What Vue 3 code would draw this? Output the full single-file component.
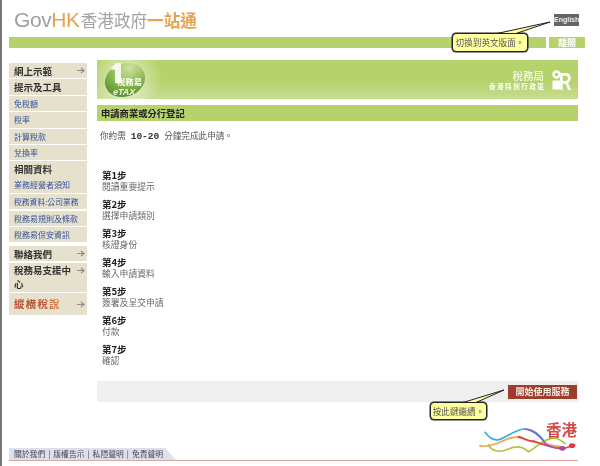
<script setup>
const navItems = [
  { t: '網上示範', k: 'head', arrow: true, h: 15, mb: 1 },
  { t: '提示及工具', k: 'head', h: 16, mb: 1 },
  { t: '免稅額', k: 'link', h: 15, mb: 1 },
  { t: '稅率', k: 'link', h: 16, mb: 1 },
  { t: '計算稅款', k: 'link', h: 15, mb: 1 },
  { t: '兌換率', k: 'link', h: 15, mb: 1 },
  { t: '相關資料', k: 'head', h: 16, mb: 0 },
  { t: '業務經營者須知', k: 'link', h: 16, mb: 1 },
  { t: '稅務資料:公司業務', k: 'link tight', h: 15, mb: 2 },
  { t: '稅務易規則及條款', k: 'link', h: 15, mb: 1 },
  { t: '稅務易保安資訊', k: 'link', h: 15, mb: 4 },
  { t: '聯絡我們', k: 'head', arrow: true, h: 15, mb: 2 },
  { t: '稅務易支援中心', k: 'head wrap', arrow: true, h: 29, mb: 1 },
  { t: '縱橫稅說', k: 'head art', arrow: true, h: 22, mb: 0 },
]
const steps = [
  ['第1步', '閱讀重要提示'],
  ['第2步', '選擇申請類別'],
  ['第3步', '核證身份'],
  ['第4步', '輸入申請資料'],
  ['第5步', '簽署及呈交申請'],
  ['第6步', '付款'],
  ['第7步', '確認'],
]
const footer = ['關於我們', '版權告示', '私隱聲明', '免責聲明']
</script>

<template>
  <div class="page">
    <header class="top">
      <div class="brand">
        <span class="gov">Gov</span><span class="hk">HK</span><span class="zh-gray">香港政府</span><span class="zh-orange">一站通</span>
      </div>
      <div class="english">English</div>
    </header>

    <div class="topbar">
      <div class="bar-main"></div>
      <div class="bar-exit">離開</div>
    </div>

    <div class="body">
      <nav class="side">
        <div
          v-for="n in navItems"
          :key="n.t"
          class="nav"
          :class="n.k"
          :style="{ minHeight: n.h + 'px', marginBottom: n.mb + 'px' }"
        >
          <span class="nav-text">{{ n.t }}</span>
          <svg v-if="n.arrow" class="arrow" width="8" height="7" viewBox="0 0 8 7">
            <path d="M0 3.5H6.5M4 1L7 3.5L4 6" fill="none" stroke="#8f8f88" stroke-width="1.2" />
          </svg>
        </div>
      </nav>

      <main class="content">
        <div class="banner">
          <svg class="etax" width="44" height="39" viewBox="0 0 44 39">
            <defs>
              <radialGradient id="orb" cx="0.7" cy="0.2" r="0.95">
                <stop offset="0" stop-color="#cfe49e" />
                <stop offset="0.55" stop-color="#86b44c" />
                <stop offset="1" stop-color="#4a8529" />
              </radialGradient>
            </defs>
            <ellipse cx="21" cy="20" rx="20.5" ry="16.5" fill="url(#orb)" transform="rotate(-20 21 20)" />
            <path d="M6 9L12 3H17V23H11V10Z" fill="#f6f9ea" />
            <text x="13" y="25" font-size="8.4" font-weight="700" fill="#fff" class="svg-cjk">稅務易</text>
            <text x="9" y="35" font-size="9" font-weight="700" font-style="italic" fill="#eef6da" class="svg-latin">eTAX</text>
          </svg>
          <div class="ird">
            <div class="ird-text">
              <div class="ird-l1">稅務局</div>
              <div class="ird-l2">香港特別行政區</div>
            </div>
            <svg width="20" height="20" viewBox="0 0 20 20">
              <circle cx="4.5" cy="4.5" r="3" fill="none" stroke="#fff" stroke-width="2.4" />
              <rect x="0.5" y="10.5" width="7.5" height="9" fill="#fff" />
              <text transform="translate(7 19.5) scale(0.72 1)" font-size="24" font-weight="700" fill="#fff" class="svg-latin">R</text>
            </svg>
          </div>
        </div>

        <h1 class="title">申請商業或分行登記</h1>

        <p class="intro">你約需 <b>10-20</b> 分鐘完成此申請。</p>

        <ol class="steps">
          <li v-for="s in steps" :key="s[0]" class="step">
            <div class="step-h">{{ s[0] }}</div>
            <div class="step-t">{{ s[1] }}</div>
          </li>
        </ol>

        <div class="actions">
          <div class="start">開始使用服務</div>
        </div>
      </main>
    </div>

    <div class="foot">
      <div class="foot-links">
        <template v-for="(f, i) in footer" :key="f">
          <span v-if="i" class="sep">|</span><span>{{ f }}</span>
        </template>
      </div>
      <svg class="hk-logo" width="110" height="48" viewBox="0 0 330 144">
        <g fill="none" stroke-linecap="round" stroke-width="5">
          <path d="M30 52C42 68 55 78 72 74C98 66 122 42 150 42C178 42 198 62 215 90" stroke="#35aee0" />
          <path d="M15 92C34 98 58 90 88 76C108 66 128 62 146 72C168 84 210 86 262 96" stroke="#eca653" />
          <path d="M40 90C52 110 76 114 100 102C122 92 140 92 160 110C176 106 196 76 230 70C248 68 262 78 270 86" stroke="#a7c83c" />
          <path d="M130 65C146 68 158 80 176 78C198 86 240 104 265 100C280 98 290 90 300 90" stroke="#d8434a" />
          <path d="M150 42C176 46 196 64 212 86C226 96 244 100 262 100" stroke="#9660b8" />
        </g>
        <ellipse cx="262" cy="100" rx="10" ry="7" fill="#a64aa6" />
        <ellipse cx="291" cy="92" rx="9" ry="7" fill="#dc3a3e" />
      </svg>
      <div class="hk-word">香港</div>
    </div>

    <div class="tip tip-lang">切換到英文版面。</div>
    <svg class="tail tail-lang" width="56" height="13" viewBox="0 0 56 13">
      <path d="M1 12.5L54 1L20 12.5Z" fill="#ffffa0" stroke="#222" stroke-width="1" />
    </svg>
    <div class="tip tip-next">按此鍵繼續。</div>
    <svg class="tail tail-next" width="44" height="14" viewBox="0 0 44 14">
      <path d="M1 13.5L42 1L14 13.5Z" fill="#ffffa0" stroke="#222" stroke-width="1" />
    </svg>
  </div>
</template>

<style>
html, body { margin: 0; background: #fff; }
</style>

<style scoped>
.page {
  position: relative;
  box-sizing: border-box;
  width: 600px;
  height: 466px;
  overflow: hidden;
  background: #fff;
  border-left: 2px solid #777;
  padding-left: 7px;
  color: #333;
  font-family: "Noto Sans CJK TC", "Liberation Sans", sans-serif;
  filter: blur(0.35px);
}
.top {
  height: 37px;
  width: 576px;
  display: flex;
  align-items: flex-start;
  justify-content: space-between;
}
.brand {
  margin: 8px 0 0 5px;
  height: 24px;
  display: flex;
  align-items: center;
  white-space: nowrap;
}
.gov, .hk {
  font-family: "Liberation Sans", sans-serif;
  font-size: 21px;
  letter-spacing: -0.4px;
}
.gov { color: #a0a0a0; }
.hk { color: #e9a04f; letter-spacing: -0.4px; }
.zh-gray, .zh-orange { font-size: 16.6px; line-height: 24px; }
.zh-gray { color: #a3a3a3; margin-left: 1px; }
.zh-orange { color: #e9a04f; font-weight: 700; }
.english {
  margin: 14px 6px 0 0;
  width: 25px;
  height: 12px;
  background: #666;
  color: #eee;
  font: 700 7px/12px "Liberation Sans", sans-serif;
  text-align: center;
}
.topbar {
  display: flex;
  gap: 3px;
  height: 11px;
  width: 576px;
}
.bar-main { width: 537px; background: #b6d26c; }
.bar-exit {
  width: 36px;
  background: #b6d26c;
  color: #fff;
  font-size: 9px;
  font-weight: 700;
  line-height: 11px;
  text-align: center;
}
.body {
  display: flex;
  height: 400px;
}
.side {
  width: 78px;
  padding-top: 15px;
}
.nav {
  box-sizing: border-box;
  background: #e6e1cd;
  display: flex;
  justify-content: space-between;
  align-items: center;
  padding: 0 2px 0 5px;
}
.nav-text { line-height: 14px; }
.head .nav-text { font-size: 9.5px; font-weight: 700; color: #333; }
.link .nav-text { font-size: 8px; color: #35539a; white-space: nowrap; }
.link.tight .nav-text { font-size: 7.8px; }
.wrap { align-items: flex-start; }
.wrap .nav-text { width: 60px; line-height: 14px; }
.wrap .arrow { margin-top: 4px; }
.art { min-height: 22px; }
.art .nav-text {
  font-size: 10.5px;
  letter-spacing: 1.2px;
  color: transparent;
  background: linear-gradient(90deg, #c0452f, #a8552a 35%, #c9503a 65%, #e0913f);
  -webkit-background-clip: text;
  background-clip: text;
}
.arrow { flex: none; }
.content {
  margin-left: 10px;
  width: 481px;
  padding-top: 12px;
  display: flex;
  flex-direction: column;
}
.banner {
  height: 39px;
  background:
    radial-gradient(circle 36px at 29px 20px, rgba(255, 255, 255, 0.7), rgba(255, 255, 255, 0)),
    linear-gradient(#b6d26c 55%, #c7dd92);
  display: flex;
  justify-content: space-between;
  align-items: center;
  padding: 0 6px 0 7px;
}
.ird { display: flex; align-items: center; gap: 8px; color: #fff; }
.ird-text { text-align: right; }
.ird-l1 { font-size: 10.5px; line-height: 13px; }
.ird-l2 { font-size: 6.5px; line-height: 9px; letter-spacing: 1.6px; margin-right: -1.6px; font-weight: 700; }
.svg-cjk { font-family: "Noto Sans CJK TC", sans-serif; }
.svg-latin { font-family: "Liberation Sans", sans-serif; }
.title {
  margin: 6px 0 0;
  height: 16px;
  background: #b6d26c;
  padding-left: 4px;
  font-size: 9.3px;
  font-weight: 700;
  line-height: 16px;
  color: #222;
}
.intro {
  margin: 7px 0 0 3px;
  font-size: 8.6px;
  line-height: 14px;
  color: #555;
}
.intro b {
  margin: 0 3px;
  font-family: "Liberation Mono", monospace;
  font-size: 9.5px;
  color: #333;
}
.steps {
  list-style: none;
  margin: 26px 0 0 5px;
  padding: 0;
  height: 211px;
}
.step { height: 29px; }
.step-h {
  font-size: 9.5px;
  font-weight: 700;
  line-height: 11px;
  color: #222;
}
.step-t {
  font-size: 8.8px;
  line-height: 11px;
  color: #666;
}
.actions {
  height: 21px;
  background: #efefef;
  display: flex;
  justify-content: flex-end;
  align-items: center;
  padding-right: 1px;
}
.start {
  width: 69px;
  height: 14px;
  background: #9b3f2c;
  color: #f4e6e0;
  font-size: 9px;
  font-weight: 700;
  line-height: 14px;
  text-align: center;
}
.foot {
  position: absolute;
  left: 7px;
  top: 420px;
  width: 569px;
  height: 40px;
  border-bottom: 1px solid #dfa5a3;
}
.foot-links {
  position: absolute;
  left: 0;
  bottom: 0;
  width: 167px;
  height: 12px;
  background: #dedfee;
  clip-path: polygon(0 0, 156px 0, 100% 100%, 0 100%);
  padding-left: 5px;
  box-sizing: border-box;
  font-size: 7.8px;
  line-height: 12px;
  color: #444;
  white-space: nowrap;
}
.sep { margin: 0 3px; }
.hk-logo { position: absolute; left: 466px; top: -5px; }
.hk-word {
  position: absolute;
  right: 1px;
  top: 0;
  color: #d64a4a;
  font-size: 15.5px;
  font-weight: 700;
  line-height: 18px;
}
.tip {
  position: absolute;
  box-sizing: border-box;
  background: #ffffa0;
  border: 1px solid #222;
  border-radius: 4px;
  font-size: 8.6px;
  color: #555;
  white-space: nowrap;
  text-align: center;
  box-shadow: 0 0 0 0.5px #222;
}
.tip-lang { left: 450px; top: 33px; width: 76px; height: 19px; line-height: 17px; }
.tip-next { left: 428px; top: 402px; width: 57px; height: 18px; line-height: 16px; }
.tail { position: absolute; }
.tail-lang { left: 494px; top: 21px; }
.tail-next { left: 460px; top: 389px; }
</style>
